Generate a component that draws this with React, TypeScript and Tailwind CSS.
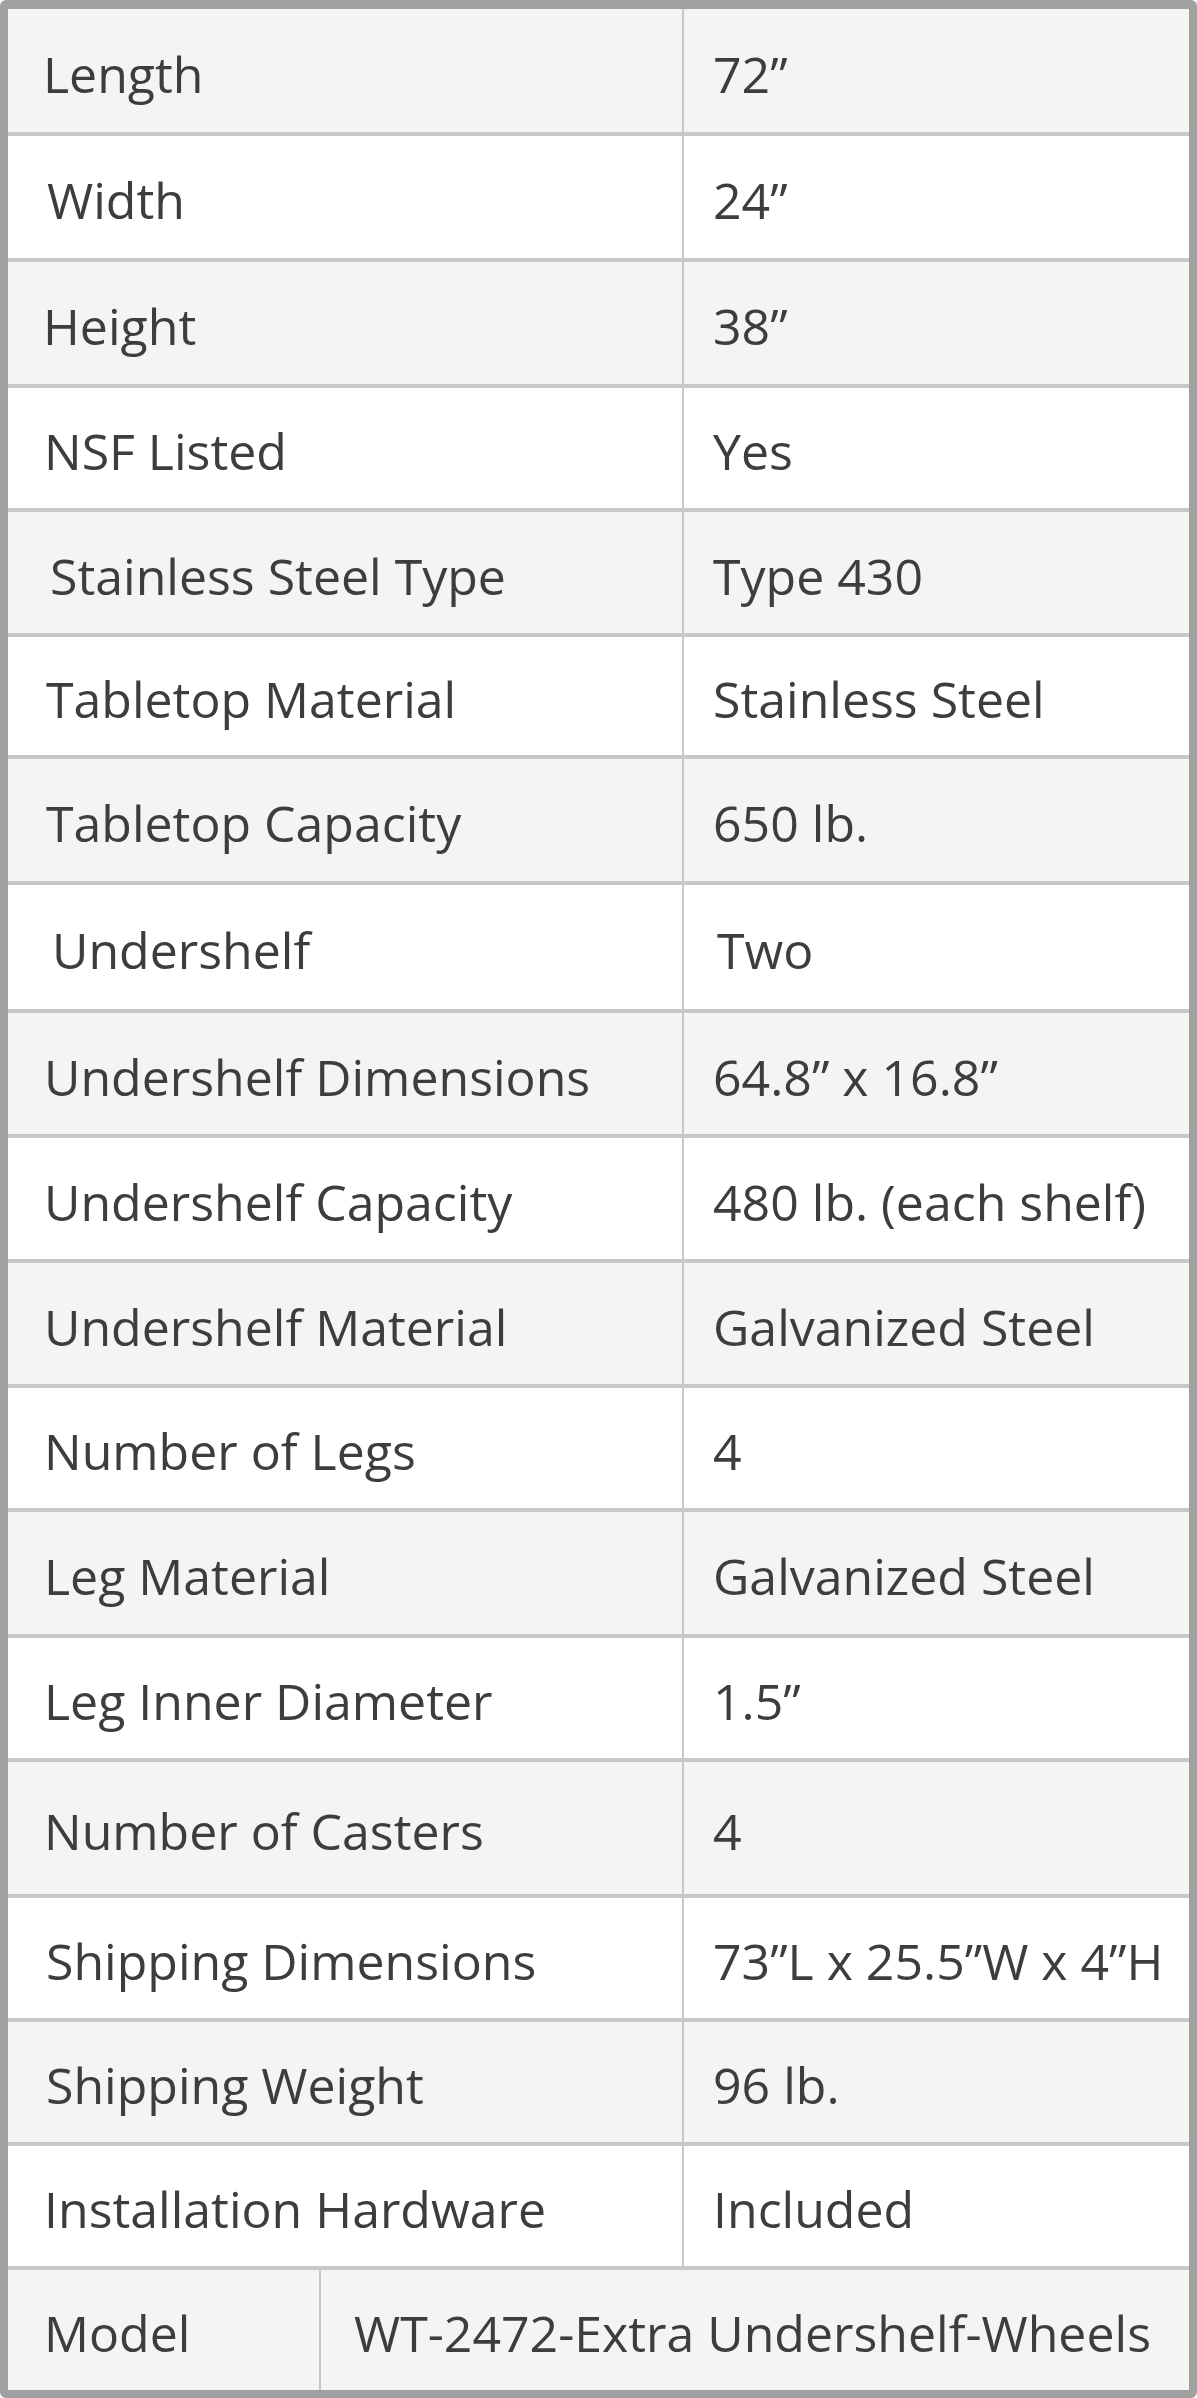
const specs = [
  { label: "Length", value: "72”", h: "h-[127px]", lx: "pl-[35px]" },
  { label: "Width", value: "24”", h: "h-[126px]", lx: "pl-[39px]" },
  { label: "Height", value: "38”", h: "h-[126px]", lx: "pl-[35px]" },
  { label: "NSF Listed", value: "Yes", h: "h-[124px]", lx: "pl-[36px]" },
  { label: "Stainless Steel Type", value: "Type 430", h: "h-[125px]", lx: "pl-[42px]" },
  { label: "Tabletop Material", value: "Stainless Steel", h: "h-[122px]", lx: "pl-[38px]" },
  { label: "Tabletop Capacity", value: "650 lb.", h: "h-[126px]", lx: "pl-[38px]" },
  { label: "Undershelf", value: "Two", h: "h-[128px]", lx: "pl-[44px]", vx: "pl-[33px]" },
  { label: "Undershelf Dimensions", value: "64.8” x 16.8”", h: "h-[125px]", lx: "pl-[36px]" },
  { label: "Undershelf Capacity", value: "480 lb. (each shelf)", h: "h-[125px]", lx: "pl-[36px]" },
  { label: "Undershelf Material", value: "Galvanized Steel", h: "h-[125px]", lx: "pl-[36px]" },
  { label: "Number of Legs", value: "4", h: "h-[124px]", lx: "pl-[36px]" },
  { label: "Leg Material", value: "Galvanized Steel", h: "h-[126px]", lx: "pl-[36px]" },
  { label: "Leg Inner Diameter", value: "1.5”", h: "h-[124px]", lx: "pl-[36px]" },
  { label: "Number of Casters", value: "4", h: "h-[136px]", lx: "pl-[36px]" },
  { label: "Shipping Dimensions", value: "73”L x 25.5”W x 4”H", h: "h-[124px]", lx: "pl-[38px]" },
  { label: "Shipping Weight", value: "96 lb.", h: "h-[124px]", lx: "pl-[38px]" },
  { label: "Installation Hardware", value: "Included", h: "h-[124px]", lx: "pl-[36px]" },
];

export default function App() {
  return (
    <div className="w-[1197px] h-[2398px] bg-white font-['Open_Sans',sans-serif] text-[50px] leading-none text-[#3d3d3d]">
      <div className="h-full border-[8px] border-t-[9px] border-[#a0a0a0] rounded-[6px] flex flex-col overflow-hidden">
        {specs.map((row, i) => (
          <div
            key={row.label}
            className={`${row.h} shrink-0 flex border-b-4 border-[#c8c8c8] ${
              i % 2 === 0 ? "bg-[#f4f4f3]" : "bg-white"
            }`}
          >
            <div className={`w-[674px] flex items-center pt-[6px] ${row.lx}`}>
              {row.label}
            </div>
            <div className="w-[2px] bg-[#c8c8c8]" />
            <div className={`flex-1 flex items-center pt-[6px] whitespace-nowrap ${row.vx ?? "pl-[29px]"}`}>
              {row.value}
            </div>
          </div>
        ))}
        {/* model row has its own split */}
        <div className="flex-1 flex bg-[#f4f4f3]">
          <div className="w-[311px] flex items-center pt-[6px] pl-[36px]">Model</div>
          <div className="w-[2px] bg-[#c8c8c8]" />
          <div className="flex-1 flex items-center pt-[6px] pl-[33px] whitespace-nowrap">
            WT-2472-Extra Undershelf-Wheels
          </div>
        </div>
      </div>
    </div>
  );
}
